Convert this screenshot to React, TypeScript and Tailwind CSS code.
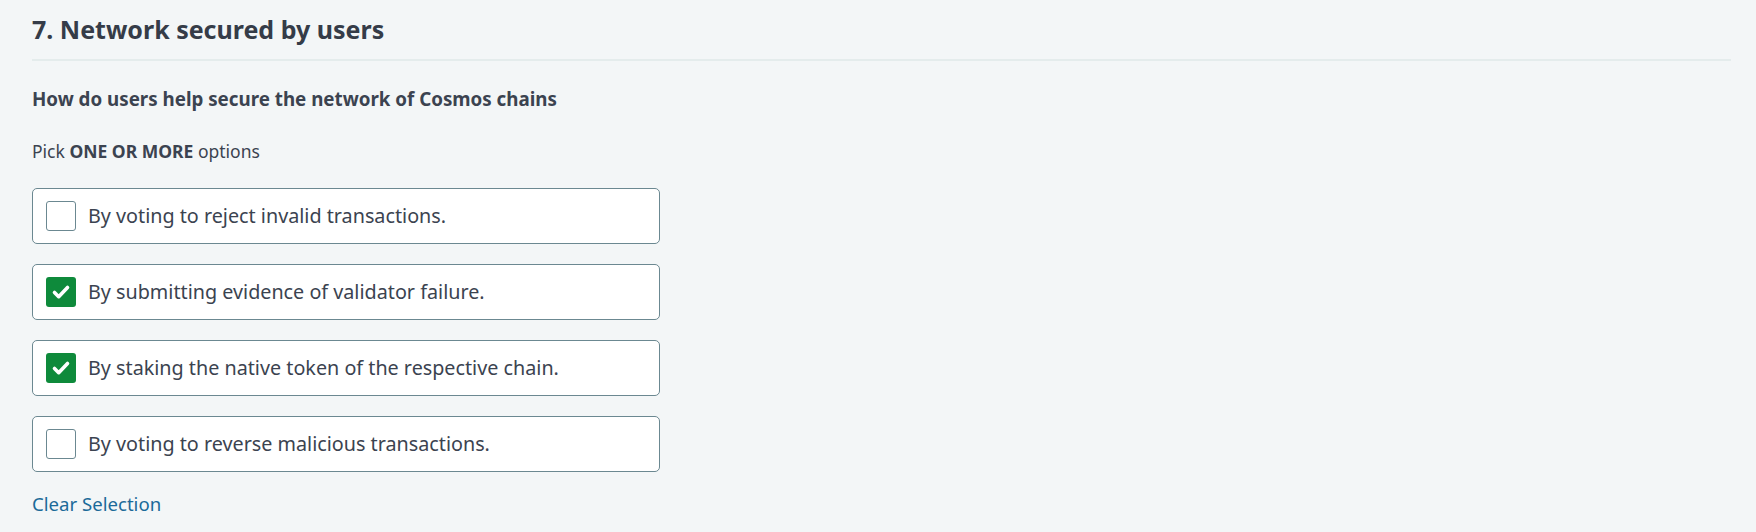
import React from 'react';

interface Option {
  label: string;
  checked: boolean;
}

const options: Option[] = [
  { label: 'By voting to reject invalid transactions.', checked: false },
  { label: 'By submitting evidence of validator failure.', checked: true },
  { label: 'By staking the native token of the respective chain.', checked: true },
  { label: 'By voting to reverse malicious transactions.', checked: false },
];

const CheckBox = ({ checked }: { checked: boolean }) => {
  if (checked) {
    return (
      <span className="flex h-[30px] w-[30px] shrink-0 items-center justify-center rounded-[3px] bg-[#0e8a3b]">
        <svg viewBox="0 0 24 24" className="h-[24px] w-[24px]" fill="none" stroke="#ffffff" strokeWidth="3.6" strokeLinecap="round" strokeLinejoin="round">
          <path d="M5.5 12.5l4.2 4.2L18.5 7.5" />
        </svg>
      </span>
    );
  }
  return <span className="h-[30px] w-[30px] shrink-0 rounded-[3px] border border-[#6b8891] bg-white" />;
};

const OptionRow = ({ option }: { option: Option }) => (
  <label className="flex h-14 w-[628px] items-center gap-3 rounded-[5px] border border-[#6b8891] bg-white pl-[13px]">
    <CheckBox checked={option.checked} />
    <span className="text-[19.75px] leading-7 text-[#3b4350]">{option.label}</span>
  </label>
);

export default function App() {
  return (
    <div className="min-h-[532px] w-full bg-[#f3f6f7] pl-8 pr-[25px] pt-[11px] text-[#3b4350]" style={{ fontFamily: '"Noto Sans", "Open Sans", sans-serif' }}>
      <h2 className="text-[25px] font-bold leading-[36px] text-[#353c48]">7. Network secured by users</h2>
      <div className="mt-[12px] h-[2px] w-full bg-[#e4ecec]" />
      <p className="mt-[26px] text-[18.75px] font-bold leading-6">How do users help secure the network of Cosmos chains</p>
      <p className="mt-[28px] text-[17.5px] leading-6">
        Pick <span className="font-bold">ONE OR MORE</span> options
      </p>
      <div className="mt-[25px] flex flex-col gap-5">
        {options.map(o => (
          <OptionRow key={o.label} option={o} />
        ))}
      </div>
      <button className="mt-5 block text-[18.6px] leading-6 text-[#1b6a99]">Clear Selection</button>
    </div>
  );
}
